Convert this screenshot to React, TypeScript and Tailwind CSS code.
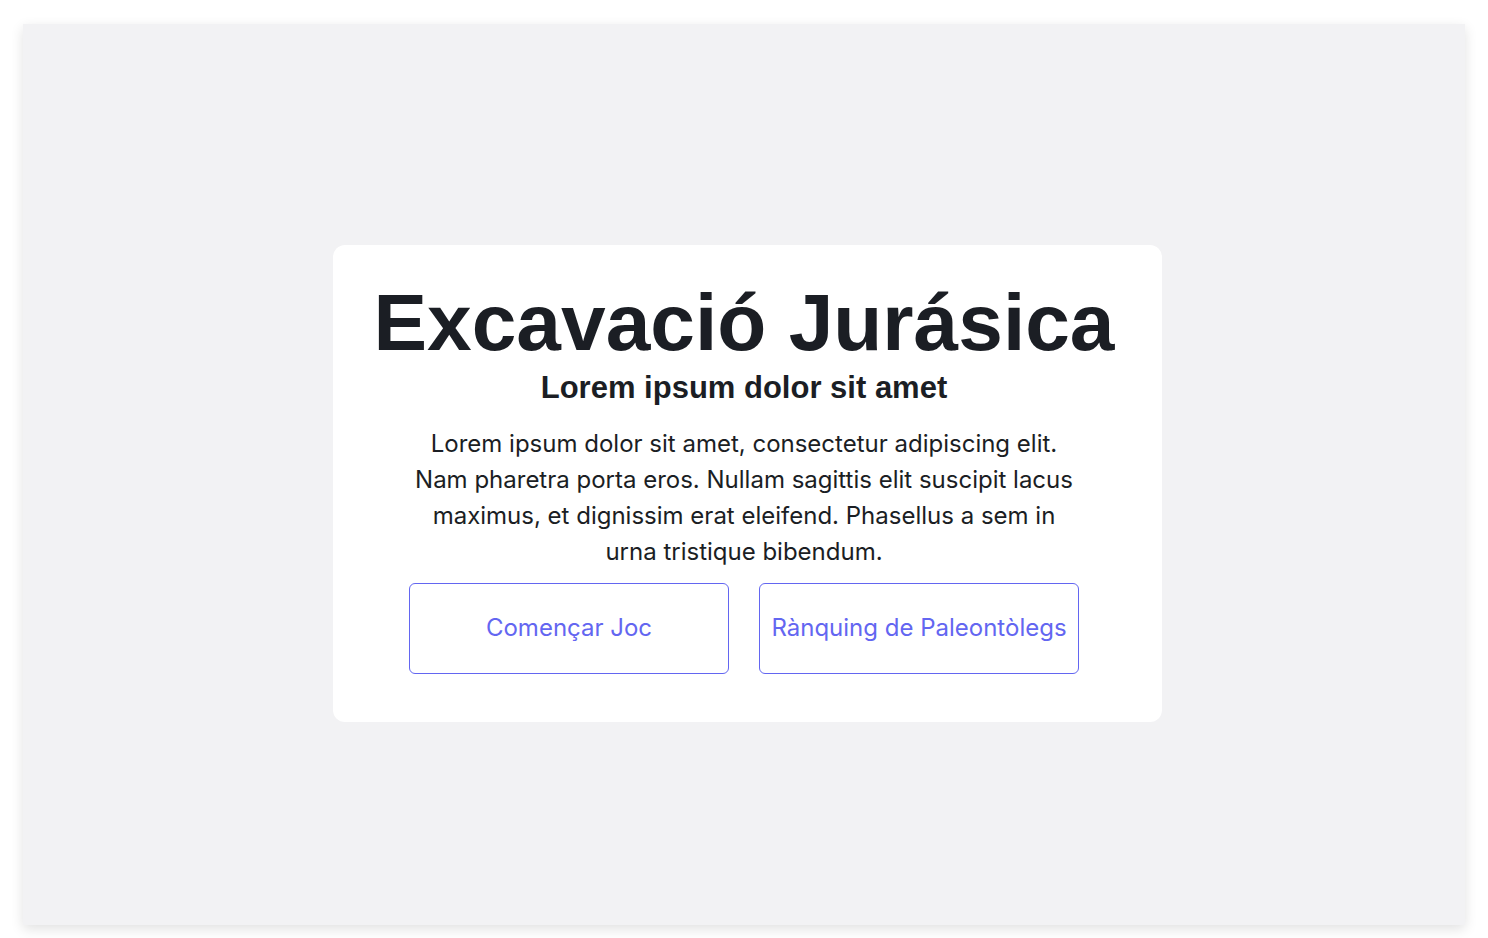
export default function App() {
  return (
    <div className="min-h-screen w-full bg-white p-[23px] pt-[24px]" style={{ fontFamily: "Inter, 'Noto Sans', sans-serif" }}>
      <div className="flex h-[901px] w-full items-center justify-center bg-[#f2f2f4] shadow-[0_4px_12px_rgba(0,0,0,0.12)]">
        <div className="ml-[6px] mt-[18px] flex w-[829px] flex-col items-center rounded-xl bg-white pb-[48px] pl-[24px] pr-[30px] pt-[37px]">
          <h1 className="whitespace-nowrap text-[80.3px] font-bold leading-none text-[#1b1e24]" style={{ fontFamily: "'Liberation Sans', Arial, sans-serif" }}>
            Excavació Jurásica
          </h1>
          <h2 className="mt-[6px] text-[31px] font-bold leading-tight text-[#1b1e24]" style={{ fontFamily: "'Liberation Sans', Arial, sans-serif" }}>
            Lorem ipsum dolor sit amet
          </h2>
          <p className="mt-[18px] max-w-[670px] text-center text-[24px] leading-[36px] text-[#1b1e24]">
            Lorem ipsum dolor sit amet, consectetur adipiscing elit. Nam pharetra porta eros. Nullam sagittis elit suscipit lacus maximus, et dignissim erat eleifend. Phasellus a sem in urna tristique bibendum.
          </p>
          <div className="mt-[13px] flex gap-[30px]">
            <button className="h-[91px] w-[320px] rounded-md border border-[#6366f1] bg-white text-[24px] text-[#6366f1]">
              Començar Joc
            </button>
            <button className="h-[91px] w-[320px] rounded-md border border-[#6366f1] bg-white text-[24px] text-[#6366f1]">
              Rànquing de Paleontòlegs
            </button>
          </div>
        </div>
      </div>
    </div>
  );
}
